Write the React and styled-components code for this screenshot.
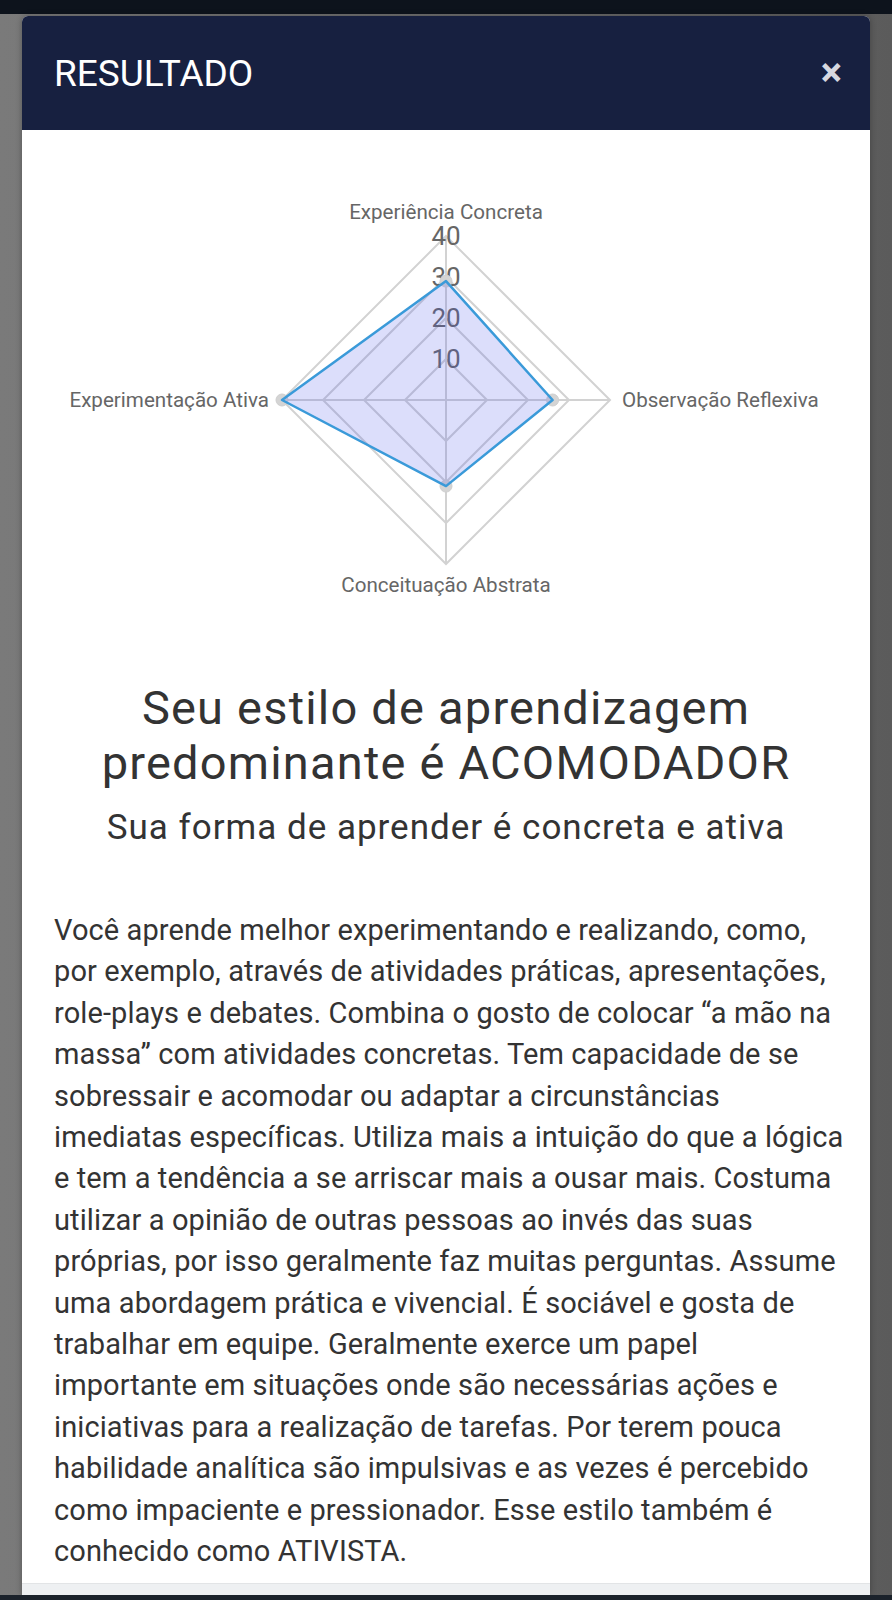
import React from "react";
import styled, { createGlobalStyle } from "styled-components";

const GlobalStyle = createGlobalStyle`
  html, body {
    margin: 0;
    padding: 0;
  }
  body {
    font-family: Roboto, "Noto Sans", Arial, sans-serif;
    background: #6a6a6a;
  }
`;

const Screen = styled.div`
  height: 1600px;
  display: flex;
  flex-direction: column;
  overflow: hidden;
  background: linear-gradient(to right, #7a7a7a, #6c6c6c 60%, #5b5b5b);
`;

const StatusBar = styled.div`
  height: 14px;
  flex-shrink: 0;
  background: #0d131c;
`;

const Backdrop = styled.div`
  flex: 1;
  min-height: 0;
  padding: 2px 22px 0 22px;
  display: flex;
  flex-direction: column;
`;

const NavBar = styled.div`
  height: 5px;
  flex-shrink: 0;
  background: #1b222b;
`;

const Modal = styled.div`
  flex: 1;
  min-height: 0;
  display: flex;
  flex-direction: column;
  background: #fff;
  border-radius: 6px 6px 0 0;
  overflow: hidden;
  box-shadow: 0 0 6px rgba(0, 0, 0, 0.3);
`;

const Header = styled.div`
  height: 114px;
  flex-shrink: 0;
  display: flex;
  align-items: center;
  justify-content: space-between;
  padding: 0 28px 0 32px;
  background: #172040;
`;

const Title = styled.h2`
  margin: 0;
  font-size: 37px;
  font-weight: 400;
  color: #fff;
`;

const Close = styled.button`
  border: 0;
  background: none;
  padding: 0;
  color: #d6d8e0;
  font-family: Roboto, Arial, sans-serif;
  font-size: 40px;
  font-weight: 700;
  line-height: 1;
  cursor: pointer;
`;

const Body = styled.div`
  flex: 1;
  min-height: 0;
  padding: 0 32px;
`;

const ChartBox = styled.div`
  margin: 0 -32px;
  display: flex;
  justify-content: center;
`;

const Heading = styled.h3`
  margin: 70px 0 0;
  text-align: center;
  font-size: 47px;
  font-weight: 400;
  line-height: 55px;
  letter-spacing: 1.2px;
  color: #333;
`;

const Subheading = styled.h4`
  margin: 16px 0 0;
  text-align: center;
  font-size: 35px;
  font-weight: 400;
  line-height: 44px;
  letter-spacing: 1px;
  color: #333;
`;

const Text = styled.p`
  margin: 60px -7px 0 0;
  font-size: 29px;
  line-height: 41.4px;
  letter-spacing: 0.1px;
  color: #333;
`;

const Footer = styled.div`
  height: 11px;
  flex-shrink: 0;
  background: #eef0f2;
  border-top: 1px solid #e2e4e6;
`;

const axes = [
  { label: "Experiência Concreta", value: 29 },
  { label: "Observação Reflexiva", value: 26 },
  { label: "Conceituação Abstrata", value: 21 },
  { label: "Experimentação Ativa", value: 40 },
];

const W = 848;
const H = 480;
const CX = 424;
const CY = 270;
const UNIT = 4.1;

const point = (i, v) => {
  const a = -Math.PI / 2 + (i * Math.PI) / 2;
  return [CX + Math.cos(a) * v * UNIT, CY + Math.sin(a) * v * UNIT];
};

const ring = (v) =>
  axes.map((_, i) => point(i, v).join(",")).join(" ");

const RadarChart = () => {
  const data = axes.map((a, i) => point(i, a.value));
  return (
    <svg width={W} height={H} viewBox={`0 0 ${W} ${H}`}>
      {[10, 20, 30, 40].map((v) => (
        <polygon key={v} points={ring(v)} fill="none" stroke="#d2d2d2" strokeWidth="2" />
      ))}
      {axes.map((_, i) => {
        const [x, y] = point(i, 40);
        return <line key={i} x1={CX} y1={CY} x2={x} y2={y} stroke="#d2d2d2" strokeWidth="2" />;
      })}
      {[10, 20, 30, 40].map((v) => (
        <text
          key={v}
          x={CX}
          y={CY - v * UNIT}
          textAnchor="middle"
          dominantBaseline="central"
          fontSize="26"
          fill="#666"
          fontFamily="Roboto, Arial, sans-serif"
        >
          {v}
        </text>
      ))}
      {data.map(([x, y], i) => (
        <circle key={i} cx={x} cy={y} r="6" fill="#d4d4d4" stroke="#cfcfcf" strokeWidth="1" />
      ))}
      <polygon
        points={data.map((p) => p.join(",")).join(" ")}
        fill="rgba(80, 90, 235, 0.2)"
        stroke="#3a9ad9"
        strokeWidth="2.5"
        strokeLinejoin="round"
      />
      <g fontSize="20.6" fill="#666" fontFamily="Roboto, Arial, sans-serif">
        <text x={CX} y={CY - 188} textAnchor="middle" dominantBaseline="central">
          {axes[0].label}
        </text>
        <text x={CX + 164 + 12} y={CY} textAnchor="start" dominantBaseline="central">
          {axes[1].label}
        </text>
        <text x={CX} y={CY + 185} textAnchor="middle" dominantBaseline="central">
          {axes[2].label}
        </text>
        <text x={CX - 164 - 13} y={CY} textAnchor="end" dominantBaseline="central">
          {axes[3].label}
        </text>
      </g>
    </svg>
  );
};

export default function App() {
  return (
    <Screen>
      <GlobalStyle />
      <StatusBar />
      <Backdrop>
        <Modal>
          <Header>
            <Title>RESULTADO</Title>
            <Close aria-label="Fechar">×</Close>
          </Header>
          <Body>
            <ChartBox>
              <RadarChart />
            </ChartBox>
            <Heading>
              Seu estilo de aprendizagem
              <br />
              predominante é ACOMODADOR
            </Heading>
            <Subheading>Sua forma de aprender é concreta e ativa</Subheading>
            <Text>
              Você aprende melhor experimentando e realizando, como, por exemplo,
              através de atividades práticas, apresentações, role-plays e debates.
              Combina o gosto de colocar “a mão na massa” com atividades concretas.
              Tem capacidade de se sobressair e acomodar ou adaptar a circunstâncias
              imediatas específicas. Utiliza mais a intuição do que a lógica e tem a
              tendência a se arriscar mais a ousar mais. Costuma utilizar a opinião
              de outras pessoas ao invés das suas próprias, por isso geralmente faz
              muitas perguntas. Assume uma abordagem prática e vivencial. É sociável
              e gosta de trabalhar em equipe. Geralmente exerce um papel importante
              em situações onde são necessárias ações e iniciativas para a
              realização de tarefas. Por terem pouca habilidade analítica são
              impulsivas e as vezes é percebido como impaciente e pressionador. Esse
              estilo também é conhecido como ATIVISTA.
            </Text>
          </Body>
          <Footer />
        </Modal>
      </Backdrop>
      <NavBar />
    </Screen>
  );
}
